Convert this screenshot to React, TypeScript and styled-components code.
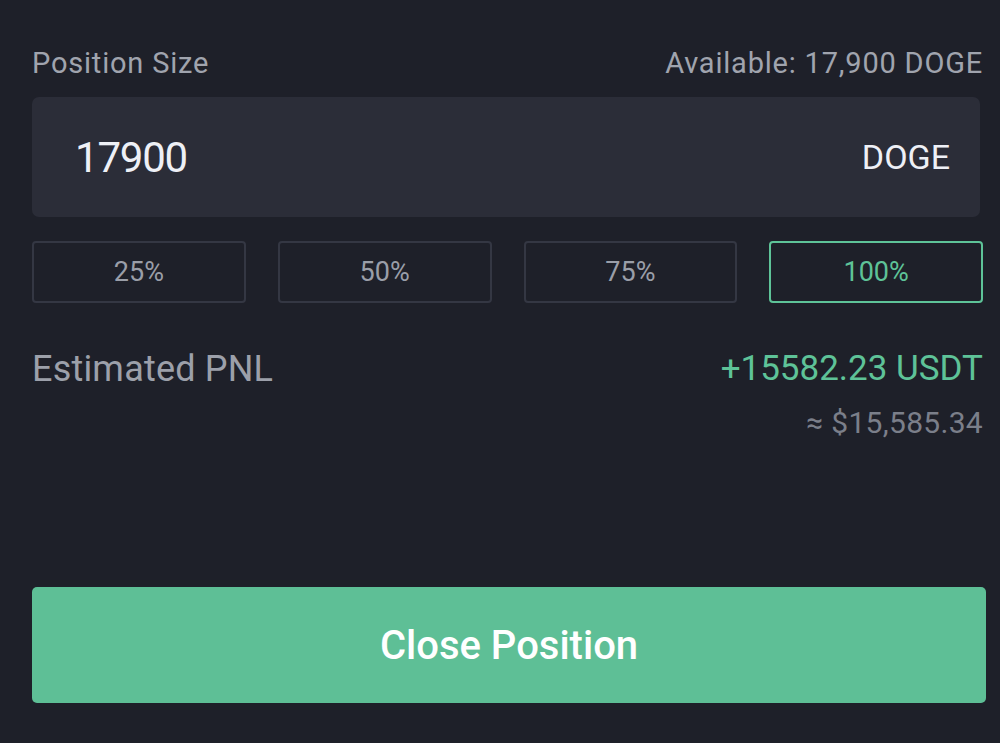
import React from "react";
import styled, { createGlobalStyle } from "styled-components";

const Global = createGlobalStyle`
  html, body { margin: 0; padding: 0; background: #1e2029; }
  body { font-family: Roboto, "Noto Sans", sans-serif; }
`;

const Page = styled.div`
  width: 1000px;
  height: 743px;
  box-sizing: border-box;
  padding: 42px 17px 0 32px;
  display: flex;
  flex-direction: column;
  background: #1e2029;
`;

const HeaderRow = styled.div`
  display: flex;
  justify-content: space-between;
  align-items: baseline;
  height: 42px;
`;

const Label = styled.span`
  font-size: 29px;
  line-height: 42px;
  color: #a0a4ae;
  letter-spacing: 0.8px;
`;

const InputBox = styled.div`
  margin-top: 13px;
  margin-right: 3px;
  height: 120px;
  border-radius: 7px;
  background: #2b2d38;
  display: flex;
  align-items: center;
  justify-content: space-between;
  padding: 0 30px 0 43px;
  box-sizing: border-box;
`;

const Amount = styled.span`
  font-size: 42px;
  color: #eef0f6;
  letter-spacing: -1.2px;
`;

const Unit = styled.span`
  font-size: 34px;
  color: #eef0f6;
`;

const PercentRow = styled.div`
  margin-top: 24px;
  display: grid;
  grid-template-columns: repeat(4, 1fr);
  gap: 32px;
`;

const PercentButton = styled.button<{ $active?: boolean }>`
  height: 62px;
  box-sizing: border-box;
  border-radius: 4px;
  background: transparent;
  border: 2px solid ${(p) => (p.$active ? "#5ec398" : "#343743")};
  color: ${(p) => (p.$active ? "#5ec398" : "#9a9ea8")};
  font-family: Roboto, sans-serif;
  font-size: 27px;
  padding: 0;
`;

const PnlRow = styled.div`
  margin-top: 44px;
  display: flex;
  justify-content: space-between;
  align-items: flex-start;
`;

const PnlLabel = styled.span`
  font-size: 36px;
  line-height: 44px;
  color: #9ca0aa;
  letter-spacing: 0.2px;
`;

const PnlValues = styled.div`
  display: flex;
  flex-direction: column;
  align-items: flex-end;
`;

const PnlValue = styled.span`
  font-size: 35px;
  line-height: 44px;
  color: #5ec398;
`;

const PnlFiat = styled.span`
  margin-top: 12px;
  font-size: 30px;
  line-height: 40px;
  color: #7b7f8a;
  letter-spacing: 0.3px;
`;

const Spacer = styled.div`
  flex: 1;
`;

const CloseButton = styled.button`
  height: 116px;
  margin-right: -3px;
  margin-bottom: 40px;
  border: none;
  border-radius: 5px;
  background: #5ebf96;
  color: #ffffff;
  font-family: Roboto, sans-serif;
  font-size: 40px;
  font-weight: 500;
`;

export default function App() {
  return (
    <>
      <Global />
      <Page>
        <HeaderRow>
          <Label>Position Size</Label>
          <Label>Available: 17,900 DOGE</Label>
        </HeaderRow>
        <InputBox>
          <Amount>17900</Amount>
          <Unit>DOGE</Unit>
        </InputBox>
        <PercentRow>
          <PercentButton>25%</PercentButton>
          <PercentButton>50%</PercentButton>
          <PercentButton>75%</PercentButton>
          <PercentButton $active>100%</PercentButton>
        </PercentRow>
        <PnlRow>
          <PnlLabel>Estimated PNL</PnlLabel>
          <PnlValues>
            <PnlValue>+15582.23 USDT</PnlValue>
            <PnlFiat>≈ $15,585.34</PnlFiat>
          </PnlValues>
        </PnlRow>
        <Spacer />
        <CloseButton>Close Position</CloseButton>
      </Page>
    </>
  );
}
